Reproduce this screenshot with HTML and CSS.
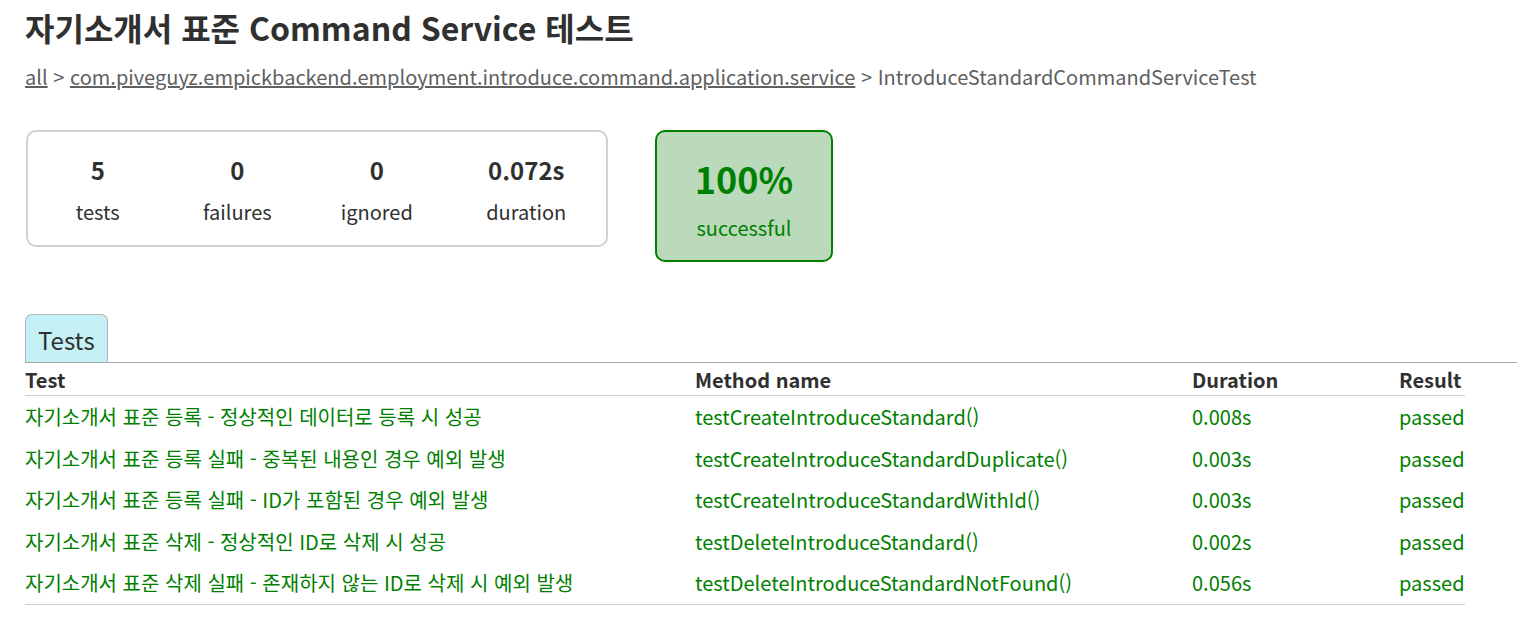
FILE: index.html
```html
<!DOCTYPE html>
<html lang="ko">
<head>
<meta charset="utf-8">
<title>자기소개서 표준 Command Service 테스트</title>
<link rel="stylesheet" href="styles.css">
</head>
<body>
<div class="content">
  <h1 class="title">자기소개서 표준 Command Service 테스트</h1>
  <div class="breadcrumbs">
    <a href="#" class="crumb-link">all</a> &gt;
    <a href="#" class="crumb-link">com.piveguyz.empickbackend.employment.introduce.command.application.service</a> &gt; IntroduceStandardCommandServiceTest
  </div>

  <div class="summary">
    <div class="summary-group">
      <div class="info-box">
        <div class="counter">5</div>
        <div class="label">tests</div>
      </div>
      <div class="info-box">
        <div class="counter">0</div>
        <div class="label">failures</div>
      </div>
      <div class="info-box">
        <div class="counter">0</div>
        <div class="label">ignored</div>
      </div>
      <div class="info-box info-duration">
        <div class="counter">0.072s</div>
        <div class="label">duration</div>
      </div>
    </div>
    <div class="success-rate">
      <div class="percent">100%</div>
      <div class="label">successful</div>
    </div>
  </div>

  <div class="tab-bar">
    <div class="tab selected">Tests</div>
  </div>

  <table class="tests">
    <thead>
      <tr>
        <th class="col-test">Test</th>
        <th class="col-method">Method name</th>
        <th class="col-duration">Duration</th>
        <th class="col-result">Result</th>
      </tr>
    </thead>
    <tbody>
      <tr class="success">
        <td>자기소개서 표준 등록 - 정상적인 데이터로 등록 시 성공</td>
        <td>testCreateIntroduceStandard()</td>
        <td>0.008s</td>
        <td>passed</td>
      </tr>
      <tr class="success">
        <td>자기소개서 표준 등록 실패 - 중복된 내용인 경우 예외 발생</td>
        <td>testCreateIntroduceStandardDuplicate()</td>
        <td>0.003s</td>
        <td>passed</td>
      </tr>
      <tr class="success">
        <td>자기소개서 표준 등록 실패 - ID가 포함된 경우 예외 발생</td>
        <td>testCreateIntroduceStandardWithId()</td>
        <td>0.003s</td>
        <td>passed</td>
      </tr>
      <tr class="success">
        <td>자기소개서 표준 삭제 - 정상적인 ID로 삭제 시 성공</td>
        <td>testDeleteIntroduceStandard()</td>
        <td>0.002s</td>
        <td>passed</td>
      </tr>
      <tr class="success">
        <td>자기소개서 표준 삭제 실패 - 존재하지 않는 ID로 삭제 시 예외 발생</td>
        <td>testDeleteIntroduceStandardNotFound()</td>
        <td>0.056s</td>
        <td>passed</td>
      </tr>
    </tbody>
  </table>
</div>
</body>
</html>
```
FILE: styles.css
```css
html, body {
  margin: 0;
  padding: 0;
  background: #ffffff;
}

body {
  font-family: "Noto Sans CJK KR", "Noto Sans", sans-serif;
  font-size: 20px;
  color: #303030;
}

.content {
  padding: 0 25px;
  overflow: hidden;
}

.title {
  margin: 0;
  padding-top: 4px;
  font-size: 32px;
  line-height: 46px;
  font-weight: bold;
  white-space: nowrap;
}

.breadcrumbs {
  margin-top: 12px;
  line-height: 30px;
  color: #606060;
  white-space: nowrap;
}

.crumb-link {
  color: #606060;
  text-decoration: underline;
}

.summary {
  display: flex;
  align-items: flex-start;
  margin-top: 38px;
}

.summary-group {
  display: flex;
  border: 2px solid #d0d0d0;
  border-radius: 10px;
  width: 578px;
  margin-left: 1px;
}

.info-box {
  width: 140px;
  padding-top: 19px;
  padding-bottom: 17px;
  text-align: center;
}

.info-box.info-duration {
  width: 160px;
}

.counter {
  font-size: 24px;
  line-height: 38px;
  font-weight: bold;
  margin-bottom: 7px;
}

.label {
  line-height: 32px;
}

.success-rate {
  width: 174px;
  margin-left: 47px;
  padding-top: 18px;
  padding-bottom: 16px;
  text-align: center;
  background-color: #bbd9bb;
  border: 2px solid #008000;
  border-radius: 10px;
  color: #008000;
}

.percent {
  font-size: 36px;
  line-height: 57px;
  font-weight: bold;
  margin-bottom: 5px;
}

.tab-bar {
  display: flex;
  margin-top: 52px;
  margin-right: -25px;
  border-bottom: 1px solid #a8a8a8;
}

.tab {
  padding: 6px 12px 3px 12px;
  font-size: 24px;
  line-height: 38px;
  border: 1px solid #b4b4b4;
  border-bottom: none;
  border-radius: 7px 7px 0 0;
  background-color: #c5f0f5;
}

.tests {
  width: 1440px;
  table-layout: fixed;
  border-collapse: collapse;
  border-bottom: 1px solid #d0d0d0;
}

.tests th {
  text-align: left;
  white-space: nowrap;
  padding: 2px 0 0 0;
  line-height: 30px;
  font-weight: bold;
  border-bottom: 1px solid #d0d0d0;
}

.tests td {
  white-space: nowrap;
  padding: 5px 0;
  line-height: 31.5px;
}

.col-test { width: 670px; }
.col-method { width: 497px; }
.col-duration { width: 207px; }
.col-result { width: 66px; }

.success td {
  color: #008000;
}
```
